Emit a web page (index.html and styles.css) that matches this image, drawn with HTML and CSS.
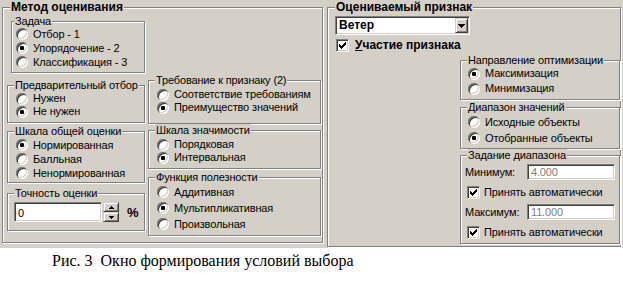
FILE: index.html
```html
<!DOCTYPE html>
<html lang="ru">
<head>
<meta charset="utf-8">
<title>Окно формирования условий выбора</title>
<link rel="stylesheet" href="styles.css">
</head>
<body>
<div class="window">
  <section class="panel panel-method">
    <div class="panel-title">Метод оценивания</div>
    <div class="method-cols">
      <div class="col col-left">
        <div class="group g-task">
          <div class="group-title">Задача</div>
          <div class="rows">
            <div class="opt"><span class="radio"></span><span>Отбор - 1</span></div>
            <div class="opt"><span class="radio checked"></span><span>Упорядочение - 2</span></div>
            <div class="opt"><span class="radio"></span><span>Классификация - 3</span></div>
          </div>
        </div>
        <div class="group g-pre">
          <div class="group-title">Предварительный отбор</div>
          <div class="rows">
            <div class="opt"><span class="radio"></span><span>Нужен</span></div>
            <div class="opt"><span class="radio checked"></span><span>Не нужен</span></div>
          </div>
        </div>
        <div class="group g-scale">
          <div class="group-title">Шкала общей оценки</div>
          <div class="rows">
            <div class="opt"><span class="radio checked"></span><span>Нормированная</span></div>
            <div class="opt"><span class="radio"></span><span>Балльная</span></div>
            <div class="opt"><span class="radio"></span><span>Ненормированная</span></div>
          </div>
        </div>
        <div class="group g-prec">
          <div class="group-title">Точность оценки</div>
          <div class="prec-row">
            <div class="edit edit-prec">0</div>
            <div class="spin">
              <span class="spin-btn"><svg width="5" height="3" viewBox="0 0 5 3"><path d="M2 0h1v1h1v1h1v1H0V2h1V1h1z"/></svg></span>
              <span class="spin-btn"><svg width="5" height="3" viewBox="0 0 5 3"><path d="M0 0h5v1H4v1H3v1H2V2H1V1H0z"/></svg></span>
            </div>
            <span class="percent">%</span>
          </div>
        </div>
      </div>
      <div class="col col-mid">
        <div class="group g-req">
          <div class="group-title">Требование к признаку (2)</div>
          <div class="rows">
            <div class="opt"><span class="radio"></span><span>Соответствие требованиям</span></div>
            <div class="opt"><span class="radio checked"></span><span>Преимущество значений</span></div>
          </div>
        </div>
        <div class="group g-sig">
          <div class="group-title">Шкала значимости</div>
          <div class="rows">
            <div class="opt"><span class="radio"></span><span>Порядковая</span></div>
            <div class="opt"><span class="radio checked"></span><span>Интервальная</span></div>
          </div>
        </div>
        <div class="group g-util">
          <div class="group-title">Функция полезности</div>
          <div class="rows">
            <div class="opt"><span class="radio"></span><span>Аддитивная</span></div>
            <div class="opt"><span class="radio checked"></span><span>Мультипликативная</span></div>
            <div class="opt"><span class="radio"></span><span>Произвольная</span></div>
          </div>
        </div>
      </div>
    </div>
  </section>
  <section class="panel panel-attr">
    <div class="panel-title">Оцениваемый признак</div>
    <div class="combo">
      <span class="combo-text">Ветер</span>
      <span class="combo-btn"><svg width="7" height="4" viewBox="0 0 7 4"><path d="M0 0h7v1H6v1H5v1H4v1H3V3H2V2H1V1H0z"/></svg></span>
    </div>
    <div class="check-row main-check">
      <span class="check"><svg width="7" height="7" viewBox="0 0 7 7"><path d="M0 2H1V3H2V4H3V3H4V2H5V1H6V0H7V3H6V4H5V5H4V6H3V7H2V6H1V5H0Z"/></svg></span>
      <span class="bold-label"><u>У</u>частие признака</span>
    </div>
    <div class="group g-dir">
      <div class="group-title">Направление оптимизации</div>
      <div class="rows">
        <div class="opt"><span class="radio checked"></span><span>Максимизация</span></div>
        <div class="opt"><span class="radio"></span><span>Минимизация</span></div>
      </div>
    </div>
    <div class="group g-range">
      <div class="group-title">Диапазон значений</div>
      <div class="rows">
        <div class="opt"><span class="radio"></span><span>Исходные объекты</span></div>
        <div class="opt"><span class="radio checked"></span><span>Отобранные объекты</span></div>
      </div>
    </div>
    <div class="group g-set">
      <div class="group-title">Задание диапазона</div>
      <div class="set-rows">
        <div class="set-row"><span class="set-label">Минимум:</span><span class="edit edit-range">4.000</span></div>
        <div class="set-row check-row">
          <span class="check"><svg width="7" height="7" viewBox="0 0 7 7"><path d="M0 2H1V3H2V4H3V3H4V2H5V1H6V0H7V3H6V4H5V5H4V6H3V7H2V6H1V5H0Z"/></svg></span>
          <span>Принять автоматически</span>
        </div>
        <div class="set-row"><span class="set-label">Максимум:</span><span class="edit edit-range">11.000</span></div>
        <div class="set-row check-row">
          <span class="check"><svg width="7" height="7" viewBox="0 0 7 7"><path d="M0 2H1V3H2V4H3V3H4V2H5V1H6V0H7V3H6V4H5V5H4V6H3V7H2V6H1V5H0Z"/></svg></span>
          <span>Принять автоматически</span>
        </div>
      </div>
    </div>
  </section>
</div>
<p class="caption">Рис. 3&nbsp; Окно формирования условий выбора</p>
</body>
</html>
```

FILE: styles.css
```css
* { box-sizing: border-box; }

body {
  margin: 0;
  background: #fff;
  color: #000;
  font-family: "Liberation Sans", Arial, sans-serif;
  font-size: 11px;
  line-height: 13px;
}

.window {
  width: 623px;
  height: 248px;
  background: #d4d0c8;
  display: flex;
  align-items: flex-start;
  padding: 7px 0 0 2px;
  letter-spacing: -0.15px;
}

/* etched frames */
.panel,
.group {
  border: 1px solid #808080;
  box-shadow: inset 1px 1px 0 #fff, 1px 1px 0 #fff;
  display: flex;
  flex-direction: column;
}

.panel-method { width: 321px; height: 236px; }
.panel-attr { width: 294px; height: 240px; margin-left: 4px; }

.panel-title {
  align-self: flex-start;
  margin: -8px 0 0 7px;
  padding: 0 1px;
  height: 14px;
  line-height: 14px;
  font-size: 12px;
  font-weight: bold;
  letter-spacing: 0;
  background: #d4d0c8;
  white-space: nowrap;
}

.method-cols { display: flex; align-items: flex-start; }
.col { display: flex; flex-direction: column; }
.col-left { width: 138px; margin-left: 4px; }
.col-mid { width: 173px; margin-left: 3px; }

.group-title {
  align-self: flex-start;
  margin: -7px 0 0 6px;
  padding: 0 1px;
  height: 13px;
  line-height: 13px;
  background: #d4d0c8;
  white-space: nowrap;
}

.rows {
  display: flex;
  flex-direction: column;
  padding-left: 8px;
  margin-top: var(--mt, 0px);
}

.opt {
  display: flex;
  align-items: center;
  gap: 5px;
  height: var(--r, 14px);
  white-space: nowrap;
}

/* radio button */
.radio {
  position: relative;
  flex: none;
  width: 12px;
  height: 12px;
  border-radius: 50%;
  background: #fff;
  box-shadow:
    inset 1px 1px 0 #808080,
    inset -1px -1px 0 #fff,
    inset 2px 2px 0 #404040,
    inset -2px -2px 0 #d4d0c8;
}
.radio.checked::after {
  content: "";
  position: absolute;
  left: 4px;
  top: 4px;
  width: 4px;
  height: 4px;
  border-radius: 1px;
  background: #000;
}

/* group placements */
.g-task { margin: 7px 0 0 4px; height: 52px; }
.g-task .group-title { margin-left: 2px; }
.g-task .rows { --mt: -1px; --r: 14px; padding-left: 4px; }

.g-pre { margin-top: 12px; height: 38px; }
.g-pre .rows { --r: 13px; }

.g-scale { margin-top: 8px; height: 52px; }
.g-scale .rows { --r: 14px; }

.g-prec { margin-top: 10px; height: 38px; }

.g-req { margin-top: 66px; height: 44px; }
.g-req .rows { --mt: 1px; --r: 13px; }

.g-sig { margin-top: 6px; height: 39px; }
.g-sig .rows { --mt: 1px; --r: 13px; }

.g-util { margin-top: 8px; height: 59px; }
.g-util .rows { --r: 16px; }

.g-dir,
.g-range,
.g-set { width: 160px; align-self: flex-end; }

.g-dir { margin-top: 8px; height: 40px; }
.g-dir .rows { --mt: -1px; --r: 15px; padding-left: 7px; }

.g-range { margin-top: 7px; height: 42px; }
.g-range .rows { --r: 16px; padding-left: 7px; }

.g-set { margin-top: 6px; height: 89px; }

/* sunken edit fields */
.edit {
  background: #fff;
  border: 1px solid;
  border-color: #808080 #fff #fff #808080;
  box-shadow: inset 1px 1px 0 #404040, inset -1px -1px 0 #d4d0c8;
  white-space: nowrap;
}

.prec-row {
  display: flex;
  align-items: center;
  margin: 2px 0 0 6px;
}
.edit-prec {
  width: 88px;
  height: 20px;
  line-height: 16px;
  padding: 2px 3px;
}
.spin {
  display: flex;
  flex-direction: column;
  margin-left: 1px;
}
.spin-btn,
.combo-btn {
  display: flex;
  align-items: center;
  justify-content: center;
  background: #d4d0c8;
  border: 1px solid;
  border-color: #d4d0c8 #404040 #404040 #d4d0c8;
  box-shadow: inset 1px 1px 0 #fff, inset -1px -1px 0 #808080;
}
.spin-btn { width: 16px; height: 10px; }
.percent {
  margin-left: 8px;
  font-size: 13px;
  font-weight: bold;
}

/* combo box */
.combo {
  display: flex;
  align-items: center;
  justify-content: space-between;
  width: 135px;
  height: 19px;
  margin: 2px 0 0 7px;
  padding: 1px;
  background: #fff;
  border: 1px solid;
  border-color: #808080 #fff #fff #808080;
  box-shadow: inset 1px 1px 0 #404040, inset -1px -1px 0 #d4d0c8;
}
.combo-text {
  padding-left: 2px;
  font-size: 12px;
  font-weight: bold;
  letter-spacing: 0;
}
.combo-btn { width: 13px; height: 15px; }

/* check boxes */
.check-row {
  display: flex;
  align-items: center;
  gap: 5px;
  white-space: nowrap;
}
.check {
  flex: none;
  display: flex;
  align-items: center;
  justify-content: center;
  width: 13px;
  height: 13px;
  background: #fff;
  border: 1px solid;
  border-color: #808080 #fff #fff #808080;
  box-shadow: inset 1px 1px 0 #404040, inset -1px -1px 0 #d4d0c8;
}
.main-check {
  height: 13px;
  margin: 4px 0 0 8px;
  gap: 6px;
}
.bold-label {
  font-size: 12px;
  font-weight: bold;
  letter-spacing: 0;
}
.bold-label u { text-underline-offset: 1px; }

.set-rows { display: flex; flex-direction: column; }
.set-row {
  display: flex;
  align-items: center;
  height: 20px;
  padding-left: 4px;
}
.set-row.check-row { padding-left: 6px; gap: 4px; }
.set-label { width: 62px; white-space: nowrap; }
.edit-range {
  width: 88px;
  height: 16px;
  line-height: 12px;
  padding: 1px 3px;
  color: #808080;
}

.caption {
  margin: 4px 0 0 52px;
  font-family: "Liberation Serif", "Times New Roman", serif;
  font-size: 16px;
  line-height: 18px;
}
```
